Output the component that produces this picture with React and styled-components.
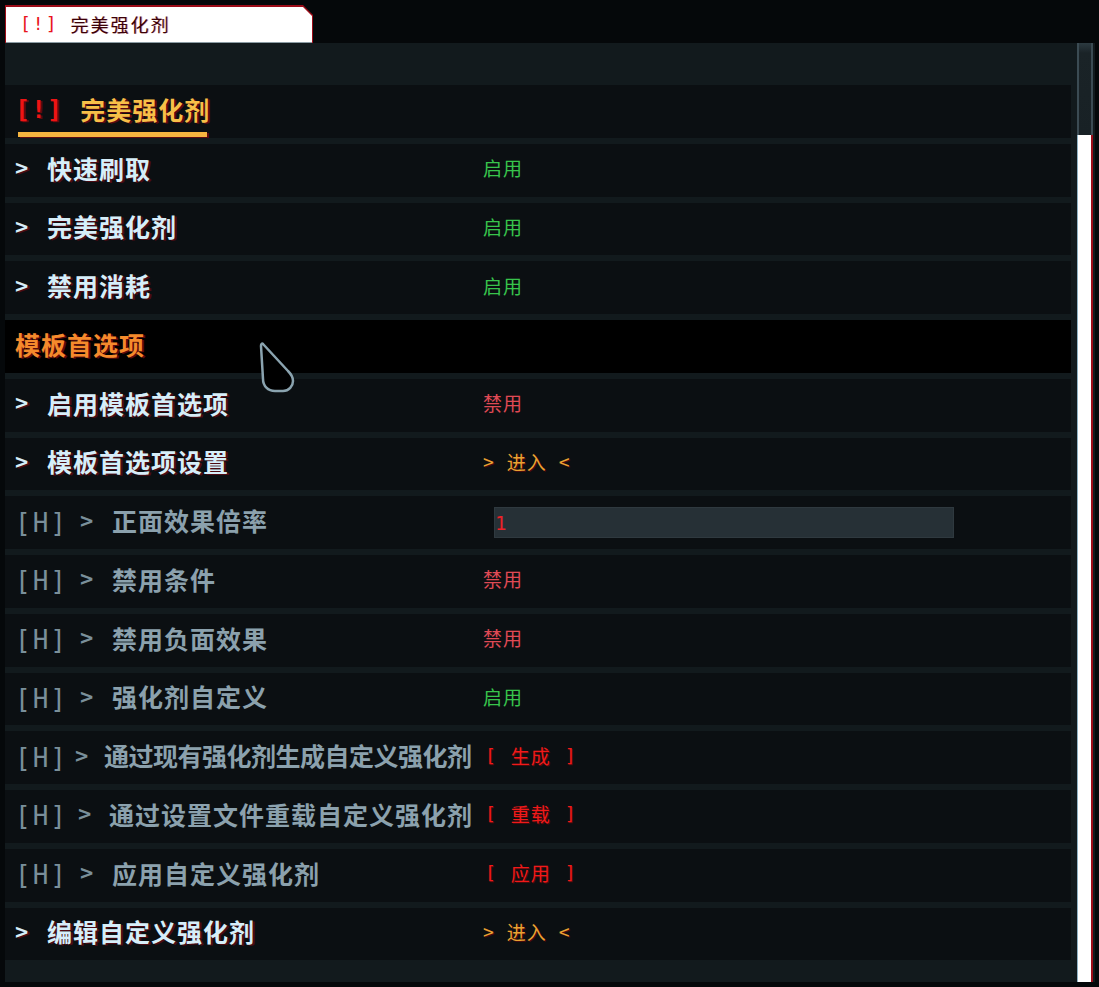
import React from 'react';
import styled, { createGlobalStyle } from 'styled-components';

const CJK = `"Noto Sans CJK SC", "Noto Sans", sans-serif`;
const MONO = `"DejaVu Sans Mono", "Liberation Mono", monospace`;

const GlobalStyle = createGlobalStyle`
  html, body {
    margin: 0;
    padding: 0;
    background: #05080a;
  }
  body {
    width: 1099px;
    height: 987px;
    overflow: hidden;
    font-family: ${CJK};
  }
`;

const Screen = styled.div`
  display: flex;
  flex-direction: column;
  height: 987px;
`;

const TabBar = styled.div`
  height: 43px;
  padding: 5px 0 0 5px;
  box-sizing: border-box;
  display: flex;
`;

const TabFrame = styled.div`
  width: 308px;
  height: 38px;
  padding: 2px 1px 0 1px;
  box-sizing: border-box;
  background: #9c0c18;
  clip-path: polygon(0 0, calc(100% - 10px) 0, 100% 10px, 100% 100%, 0 100%);
`;

const TabFace = styled.div`
  height: 100%;
  box-sizing: border-box;
  background: #ffffff;
  border-bottom: 1px solid #8c9ca4;
  clip-path: polygon(0 0, calc(100% - 9px) 0, 100% 9px, 100% 100%, 0 100%);
  display: flex;
  align-items: center;
  padding: 0 0 2px 14px;
  gap: 12px;
`;

const TabMark = styled.span`
  font-family: ${MONO};
  font-size: 18px;
  letter-spacing: 2px;
  color: #e8141c;
`;

const TabTitle = styled.span`
  font-size: 18px;
  letter-spacing: 2px;
  color: #3a0008;
  text-shadow: 1px 0 0 rgba(196, 18, 30, 0.45);
`;

const Panel = styled.div`
  margin-left: 5px;
  width: 1090px;
  height: 939px;
  box-sizing: border-box;
  padding-right: 2px;
  background: #121a1d;
  display: flex;
  gap: 6px;
`;

const List = styled.div`
  flex: 1;
  padding-top: 42px;
  display: flex;
  flex-direction: column;
  gap: 6px;
`;

const Row = styled.div`
  position: relative;
  height: 52.75px;
  flex-shrink: 0;
  box-sizing: border-box;
  padding: 0 0 5px 10px;
  display: flex;
  align-items: center;
  background: ${(p) => (p.$section ? '#000000' : '#0b0f12')};
`;

const HeaderRow = styled(Row)`
  flex-direction: column;
  align-items: flex-start;
  padding: 11px 0 0 10px;
`;

const HeaderLine = styled.div`
  display: flex;
  align-items: center;
  height: 26px;
  gap: 17px;
`;

const HeaderMark = styled.span`
  font-family: ${MONO};
  font-weight: bold;
  font-size: 25px;
  letter-spacing: 1px;
  color: #ee1414;
  text-shadow: 2px 1px 0 #5c0a0e;
`;

const HeaderTitle = styled.span`
  font-size: 25px;
  font-weight: bold;
  letter-spacing: 1px;
  color: #f7bf48;
  text-shadow: 2px 1px 0 #5c0a10;
`;

const HeaderBar = styled.div`
  margin: 10px 0 0 3px;
  width: 189px;
  height: 5px;
  background: #f6b540;
  box-shadow: 2px 1px 0 #5c0a10;
`;

const SectionTitle = styled.span`
  font-size: 25px;
  font-weight: bold;
  letter-spacing: 1px;
  color: #f58a2c;
  text-shadow: 2px 1px 0 #5a0c0c;
`;

const Label = styled.div`
  width: 468px;
  flex-shrink: 0;
  display: flex;
  align-items: center;
  white-space: nowrap;
  font-size: 25px;
  font-weight: bold;
  letter-spacing: ${(p) => (p.$tight ? '-0.5px' : '1px')};
  color: ${(p) => (p.$hidden ? '#8ba1ad' : '#d6eef9')};
  text-shadow: ${(p) => (p.$hidden ? 'none' : '2px 1px 0 #4d0a12')};
`;

const HTag = styled.span`
  width: ${(p) => p.$w}px;
  flex-shrink: 0;
  padding-top: 5px;
  line-height: 1;
  font-family: ${MONO};
  font-weight: normal;
  font-size: 26px;
  letter-spacing: 2px;
  color: #7a8f9a;
`;

const Arrow = styled.span`
  width: ${(p) => p.$w}px;
  flex-shrink: 0;
  font-family: ${MONO};
  font-weight: bold;
  font-size: 22px;
  letter-spacing: 0;
  color: ${(p) => (p.$hidden ? '#7a8f9a' : '#d6eef9')};
`;

const State = styled.span`
  font-size: 19px;
  letter-spacing: 1px;
  color: ${(p) => (p.$on ? '#38c44c' : '#e04a55')};
`;

const Action = styled.span`
  display: flex;
  align-items: center;
  gap: ${(p) => (p.$bracket ? 14 : 12)}px;
  margin-left: ${(p) => (p.$bracket ? 2 : 0)}px;
  font-size: 19px;
  letter-spacing: 1px;
  color: ${(p) => (p.$bracket ? '#f01a1a' : '#e9a232')};
  text-shadow: 1px 1px 0 #4a0a0c;
`;

const Glyph = styled.span`
  font-family: ${MONO};
  font-size: 18px;
`;

const Field = styled.div`
  margin: 5px 0 0 11px;
  width: 460px;
  height: 31px;
  box-sizing: border-box;
  background: #263036;
  border: 1px solid #2f393f;
  display: flex;
  align-items: center;
  font-family: ${MONO};
  font-size: 19px;
  color: #ec2128;
`;

const Cursor = styled.svg`
  position: absolute;
  left: 252px;
  top: 21px;
  z-index: 2;
`;

const Scroll = styled.div`
  width: 16px;
  display: flex;
  flex-direction: column;
`;

const Thumb = styled.div`
  height: 92px;
  box-sizing: border-box;
  border-left: 2px solid #3b4b53;
  border-right: 2px solid #3b4b53;
  background: linear-gradient(#2c3a40 0, #1a2327 10px, #182125 100%);
`;

const Track = styled.div`
  flex: 1;
  background: #ffffff;
  border-left: 1px solid #8fb2c4;
  border-right: 2px solid #9c0c18;
`;

const rows = [
  { label: '快速刷取', value: { type: 'state', on: true } },
  { label: '完美强化剂', value: { type: 'state', on: true } },
  { label: '禁用消耗', value: { type: 'state', on: true } },
  { section: '模板首选项' },
  { label: '启用模板首选项', value: { type: 'state', on: false } },
  { label: '模板首选项设置', value: { type: 'enter' } },
  { label: '正面效果倍率', hidden: true, value: { type: 'field', text: '1' } },
  { label: '禁用条件', hidden: true, value: { type: 'state', on: false } },
  { label: '禁用负面效果', hidden: true, value: { type: 'state', on: false } },
  { label: '强化剂自定义', hidden: true, value: { type: 'state', on: true } },
  { label: '通过现有强化剂生成自定义强化剂', hidden: true, tight: true, tag: 60, arrow: 29, value: { type: 'bracket', text: '生成' } },
  { label: '通过设置文件重载自定义强化剂', hidden: true, tag: 63, arrow: 31, value: { type: 'bracket', text: '重载' } },
  { label: '应用自定义强化剂', hidden: true, value: { type: 'bracket', text: '应用' } },
  { label: '编辑自定义强化剂', value: { type: 'enter' } },
];

function Value({ value }) {
  if (value.type === 'state') {
    return <State $on={value.on}>{value.on ? '启用' : '禁用'}</State>;
  }
  if (value.type === 'enter') {
    return (
      <Action>
        <Glyph>&gt;</Glyph>
        <span>进入</span>
        <Glyph>&lt;</Glyph>
      </Action>
    );
  }
  if (value.type === 'bracket') {
    return (
      <Action $bracket>
        <Glyph>[</Glyph>
        <span>{value.text}</span>
        <Glyph>]</Glyph>
      </Action>
    );
  }
  return <Field>{value.text}</Field>;
}

function PointerMark() {
  return (
    <Cursor width="40" height="56" viewBox="0 0 40 56">
      <path
        d="M6 3 C5 2 4 3 4 5 L6 38 C6 45 11 50 18 50 L26 50 C32 50 36 45 36 40 C36 36 34 33 31 30 Z"
        fill="#000"
        stroke="#8aa3af"
        strokeWidth="2.5"
        strokeLinejoin="round"
      />
    </Cursor>
  );
}

export default function App() {
  return (
    <>
      <GlobalStyle />
      <Screen>
        <TabBar>
          <TabFrame>
            <TabFace>
              <TabMark>[!]</TabMark>
              <TabTitle>完美强化剂</TabTitle>
            </TabFace>
          </TabFrame>
        </TabBar>
        <Panel>
          <List>
            <HeaderRow>
              <HeaderLine>
                <HeaderMark>[!]</HeaderMark>
                <HeaderTitle>完美强化剂</HeaderTitle>
              </HeaderLine>
              <HeaderBar />
            </HeaderRow>
            {rows.map((r, i) =>
              r.section ? (
                <Row key={i} $section>
                  <SectionTitle>{r.section}</SectionTitle>
                  <PointerMark />
                </Row>
              ) : (
                <Row key={i}>
                  <Label $hidden={r.hidden} $tight={r.tight}>
                    {r.hidden && <HTag $w={r.tag || 65}>[H]</HTag>}
                    <Arrow $hidden={r.hidden} $w={r.hidden ? r.arrow || 32 : 32}>&gt;</Arrow>
                    <span>{r.label}</span>
                  </Label>
                  <Value value={r.value} />
                </Row>
              )
            )}
          </List>
          <Scroll>
            <Thumb />
            <Track />
          </Scroll>
        </Panel>
      </Screen>
    </>
  );
}
